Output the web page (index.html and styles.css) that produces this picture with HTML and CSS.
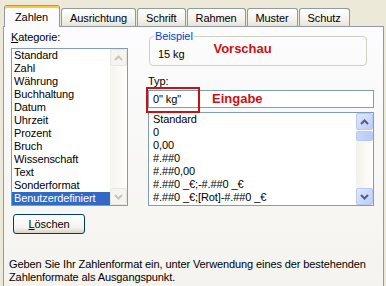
FILE: index.html
```html
<!DOCTYPE html>
<html lang="de">
<head>
  <meta charset="UTF-8">
  <title>Zellen formatieren</title>
  <link rel="stylesheet" href="styles.css">
</head>
<body>
  <div class="tabs">
    <div class="tab active">Zahlen</div>
    <div class="tab">Ausrichtung</div>
    <div class="tab">Schrift</div>
    <div class="tab">Rahmen</div>
    <div class="tab">Muster</div>
    <div class="tab">Schutz</div>
  </div>
  <div class="page">
    <div class="columns">
      <div class="left">
        <div class="label"><u>K</u>ategorie:</div>
        <div class="listbox category">
          <ul class="items">
            <li>Standard</li>
            <li>Zahl</li>
            <li>Währung</li>
            <li>Buchhaltung</li>
            <li>Datum</li>
            <li>Uhrzeit</li>
            <li>Prozent</li>
            <li>Bruch</li>
            <li>Wissenschaft</li>
            <li>Text</li>
            <li>Sonderformat</li>
            <li class="selected">Benutzerdefiniert</li>
          </ul>
          <div class="scrollbar disabled">
            <div class="sb-btn"><svg width="9" height="6" viewBox="0 0 9 6"><path d="M1 5L4.5 1.5L8 5"/></svg></div>
            <div class="sb-track"></div>
            <div class="sb-btn"><svg width="9" height="6" viewBox="0 0 9 6"><path d="M1 1L4.5 4.5L8 1"/></svg></div>
          </div>
        </div>
        <button class="btn"><u>L</u>öschen</button>
      </div>
      <div class="right">
        <fieldset class="sample">
          <legend>Beispiel</legend>
          <div class="sample-row">
            <span>15 kg</span>
            <span class="note">Vorschau</span>
          </div>
        </fieldset>
        <div class="label type-label">Typ:</div>
        <div class="input-wrap">
          <div class="input">
            <span>0" kg"</span>
            <span class="note">Eingabe</span>
          </div>
          <div class="mark"></div>
        </div>
        <div class="listbox types">
          <ul class="items">
            <li>Standard</li>
            <li>0</li>
            <li>0,00</li>
            <li>#.##0</li>
            <li>#.##0,00</li>
            <li>#.##0 _€;-#.##0 _€</li>
            <li>#.##0 _€;[Rot]-#.##0 _€</li>
          </ul>
          <div class="scrollbar">
            <div class="sb-btn"><svg width="9" height="6" viewBox="0 0 9 6"><path d="M1 5L4.5 1.5L8 5"/></svg></div>
            <div class="sb-track"><div class="sb-thumb"></div></div>
            <div class="sb-btn"><svg width="9" height="6" viewBox="0 0 9 6"><path d="M1 1L4.5 4.5L8 1"/></svg></div>
          </div>
        </div>
      </div>
    </div>
    <p class="hint">Geben Sie Ihr Zahlenformat ein, unter Verwendung eines der bestehenden<br>Zahlenformate als Ausgangspunkt.</p>
  </div>
</body>
</html>
```

FILE: styles.css
```css
* {
  box-sizing: border-box;
  margin: 0;
  padding: 0;
}
body {
  background: #ece9d8;
  color: #000;
  font-family: "Liberation Sans", Arial, sans-serif;
  font-size: 11px;
  line-height: 13px;
  letter-spacing: -0.1px;
  width: 386px;
  height: 286px;
  overflow: hidden;
}
u {
  text-decoration: underline;
}

/* tab strip */
.tabs {
  display: flex;
  align-items: flex-end;
  gap: 1px;
  height: 26px;
  padding-left: 4px;
}
.tab {
  height: 18px;
  padding: 3px 8px 0;
  border: 1px solid #919b9c;
  border-bottom: none;
  border-radius: 3px 3px 0 0;
  background: linear-gradient(#ffffff, #f3f2ed 60%, #e6e4dc);
  white-space: nowrap;
}
.tab.active {
  position: relative;
  z-index: 1;
  height: 22px;
  margin-bottom: -1px;
  padding: 5px 11px 0 10px;
  border-top: 1px solid #e68b2c;
  box-shadow: inset 0 2px #ffc73c;
  background: #fcfcfe;
}

/* tab page */
.page {
  margin-left: 3px;
  width: 381px;
  height: 270px;
  padding: 4px 9px 0 5px;
  border: 1px solid #919b9c;
  background: linear-gradient(#fcfcfe, #f4f3ee);
}
.columns {
  display: grid;
  grid-template-columns: 117px 226px;
  column-gap: 20px;
  padding-left: 2px;
}
.label {
  height: 13px;
}

/* list boxes */
.listbox {
  display: flex;
  border: 1px solid #7f9db9;
  background: #fff;
  overflow: hidden;
}
.category {
  margin-top: 4px;
  height: 158px;
}
.types {
  margin-top: 4px;
  height: 94px;
}
.items {
  flex: 1;
  list-style: none;
}
.items li {
  height: 13px;
  padding-left: 2px;
  white-space: nowrap;
}
.types .items li {
  padding-left: 4px;
}
.items li.selected {
  background: #316ac5;
  color: #fff;
}

/* scrollbars */
.scrollbar {
  width: 17px;
  display: flex;
  flex-direction: column;
  background: linear-gradient(90deg, #f3f1ec, #fefefb);
}
.sb-btn {
  height: 17px;
  display: flex;
  align-items: center;
  justify-content: center;
  border: 1px solid #b9cbf3;
  border-radius: 2px;
  background: linear-gradient(135deg, #dde7fd, #bccdf7);
}
.sb-btn path {
  fill: none;
  stroke: #4d6185;
  stroke-width: 2;
}
.sb-track {
  flex: 1;
  padding-top: 1px;
}
.sb-thumb {
  height: 10px;
  border: 1px solid #b9cbf3;
  border-radius: 2px;
  background: linear-gradient(90deg, #c9d7fb, #b7c9f5);
}
.disabled {
  background: linear-gradient(90deg, #f6f5f0, #fdfdfa);
}
.disabled .sb-btn {
  border-color: #e8e7df;
  background: #f5f4ef;
}
.disabled .sb-btn path {
  stroke: #c7c6ba;
}

/* button */
.btn {
  display: block;
  margin: 8px 0 0 2px;
  width: 72px;
  height: 20px;
  border: 1px solid #003c74;
  border-radius: 3px;
  background: linear-gradient(#ffffff, #f4f3ee 70%, #d8d2c6);
  font: inherit;
  letter-spacing: inherit;
  color: #000;
}

/* preview group */
.sample {
  margin: -1px 7px 0 1px;
  padding: 5px 8px 4px;
  border: 1px solid #d0d0bf;
  border-radius: 4px;
}
.sample legend {
  margin-left: -4px;
  padding: 0 1px;
  color: #0046d5;
}
.sample-row {
  display: flex;
  align-items: flex-start;
  gap: 29px;
}
.note {
  color: #cc1111;
  font-size: 13px;
  font-weight: bold;
  letter-spacing: 0;
  line-height: 16px;
}
.sample-row .note {
  margin-top: -7px;
}

/* type input */
.type-label {
  margin-top: 9px;
}
.input-wrap {
  position: relative;
  margin-top: 2px;
}
.input {
  display: flex;
  align-items: baseline;
  gap: 31px;
  height: 18px;
  padding: 0 4px;
  border: 1px solid #7f9db9;
  background: #fff;
  line-height: 16px;
}
.mark {
  position: absolute;
  left: -2px;
  top: -3px;
  width: 54px;
  height: 26px;
  border: 2px solid #cc1111;
}

.hint {
  margin-top: 24px;
}
```
